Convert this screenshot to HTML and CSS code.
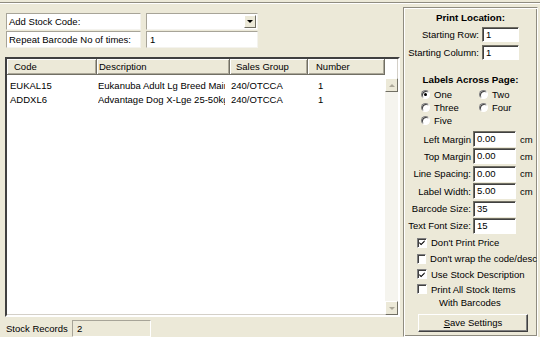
FILE: index.html
```html
<!DOCTYPE html>
<html>
<head>
<meta charset="utf-8">
<link rel="stylesheet" href="styles.css">
</head>
<body>
<div class="topline"></div>
<div class="main">
  <div class="leftcol">
    <div class="formrow">
      <div class="lbl">Add Stock Code:</div>
      <div class="combo"><span class="combo-val"></span><span class="ddbtn"><i class="tri-down"></i></span></div>
    </div>
    <div class="formrow">
      <div class="lbl">Repeat Barcode No of times:</div>
      <div class="txt">1</div>
    </div>
    <div class="list">
      <div class="lhead">
        <div class="hc c1">Code</div>
        <div class="hc c2">Description</div>
        <div class="hc c3">Sales Group</div>
        <div class="hc c4">Number</div>
      </div>
      <div class="lbody">
        <div class="rows">
          <div class="lrow">
            <div class="rc c1">EUKAL15</div>
            <div class="rc c2"><span class="clip">Eukanuba Adult Lg Breed Main</span></div>
            <div class="rc c3">240/OTCCA</div>
            <div class="rc c4">1</div>
          </div>
          <div class="lrow">
            <div class="rc c1">ADDXL6</div>
            <div class="rc c2"><span class="clip">Advantage Dog X-Lge 25-50kg</span></div>
            <div class="rc c3">240/OTCCA</div>
            <div class="rc c4">1</div>
          </div>
        </div>
        <div class="vscroll">
          <div class="sbtn"><i class="tri-up"></i></div>
          <div class="strack"></div>
          <div class="sbtn"><i class="tri-dn"></i></div>
        </div>
      </div>
    </div>
    <div class="status">
      <span class="st-lbl">Stock Records</span>
      <div class="st-box">2</div>
    </div>
  </div>

  <div class="panel">
    <div class="ptitle t1">Print Location:</div>
    <div class="srow r1"><span class="slbl">Starting Row:</span><div class="pin w37">1</div></div>
    <div class="srow r2"><span class="slbl">Starting Column:</span><div class="pin w37">1</div></div>
    <div class="ptitle t2">Labels Across Page:</div>
    <div class="radios">
      <div class="radio"><i class="rb on"></i><span>One</span></div>
      <div class="radio"><i class="rb"></i><span>Two</span></div>
      <div class="radio"><i class="rb"></i><span>Three</span></div>
      <div class="radio"><i class="rb"></i><span>Four</span></div>
      <div class="radio"><i class="rb"></i><span>Five</span></div>
    </div>
    <div class="fields">
      <div class="frow"><span class="flbl">Left Margin</span><div class="pin w43">0.00</div><span class="unit">cm</span></div>
      <div class="frow"><span class="flbl">Top Margin</span><div class="pin w43">0.00</div><span class="unit">cm</span></div>
      <div class="frow"><span class="flbl">Line Spacing:</span><div class="pin w43">0.00</div><span class="unit">cm</span></div>
      <div class="frow"><span class="flbl">Label Width:</span><div class="pin w43">5.00</div><span class="unit">cm</span></div>
      <div class="frow"><span class="flbl">Barcode Size:</span><div class="pin w43">35</div></div>
      <div class="frow"><span class="flbl">Text Font Size:</span><div class="pin w43">15</div></div>
    </div>
    <div class="checks">
      <div class="chk h16"><i class="cb on"><svg viewBox="0 0 9 9" width="9" height="9"><path d="M1.5 4 L3.5 6 L7.5 2 L7.5 3.6 L3.5 7.6 L1.5 5.6 Z" fill="#000"/></svg></i><span>Don't Print Price</span></div>
      <div class="chk h16"><i class="cb"></i><span>Don't wrap the code/desc</span></div>
      <div class="chk h15"><i class="cb on"><svg viewBox="0 0 9 9" width="9" height="9"><path d="M1.5 4 L3.5 6 L7.5 2 L7.5 3.6 L3.5 7.6 L1.5 5.6 Z" fill="#000"/></svg></i><span>Use Stock Description</span></div>
      <div class="chk h15"><i class="cb"></i><span>Print All Stock Items</span></div>
      <div class="chk2">With Barcodes</div>
    </div>
    <div class="btn"><span><u>S</u>ave Settings</span></div>
  </div>
</div>
</body>
</html>
```

FILE: styles.css
```css
html, body {
  margin: 0;
  padding: 0;
}
body {
  width: 540px;
  height: 337px;
  overflow: hidden;
  background: #ECE9D8;
  font-family: "Liberation Sans", Arial, sans-serif;
  font-size: 9.5px;
  color: #000;
}
.topline {
  margin-top: 2px;
  height: 0;
  border-top: 1px solid #8f8c80;
  border-bottom: 1px solid #fff;
}
.main {
  display: flex;
  align-items: flex-start;
}
.leftcol {
  margin-left: 5px;
  margin-top: 9px;
  width: 395px;
  display: flex;
  flex-direction: column;
}
.formrow {
  display: flex;
  height: 17px;
  margin-bottom: 1px;
  margin-left: 1px;
}
.lbl {
  box-sizing: border-box;
  width: 135px;
  height: 17px;
  background: #fff;
  border: 1px solid;
  border-color: #a7a498 #f4f3ee #f4f3ee #a7a498;
  padding-left: 2px;
  line-height: 15px;
}
.combo, .txt {
  box-sizing: border-box;
  margin-left: 5px;
  width: 112px;
  height: 17px;
  background: #fff;
  border: 1px solid;
  border-color: #a7a498 #f4f3ee #f4f3ee #a7a498;
  line-height: 15px;
  padding-left: 3px;
  position: relative;
}
.ddbtn {
  position: absolute;
  right: 1px;
  top: 1px;
  width: 12px;
  height: 13px;
  box-sizing: border-box;
  background: #ECE9D8;
  border: 1px solid;
  border-color: #fff #716f64 #716f64 #fff;
  display: flex;
  align-items: center;
  justify-content: center;
}
.tri-down {
  width: 0; height: 0;
  border-left: 3px solid transparent;
  border-right: 3px solid transparent;
  border-top: 3px solid #000;
}
.list {
  margin-top: 8px;
  box-sizing: border-box;
  width: 395px;
  height: 260px;
  border: 2px solid;
  border-color: #404040 #ffffff #ffffff #404040;
  box-shadow: inset -1px -1px 0 #d4d0c8;
  background: #fff;
  display: flex;
  flex-direction: column;
}
.lhead {
  display: grid;
  grid-template-columns: 90px 133px 78px 77px;
  height: 16px;
}
.hc {
  box-sizing: border-box;
  background: #ECE9D8;
  border-right: 1px solid #716f64;
  border-bottom: 1px solid #716f64;
  box-shadow: inset 1px 1px 0 #fff, inset -1px -1px 0 #aca899;
  line-height: 15px;
  white-space: nowrap;
  overflow: hidden;
}
.hc.c1 { padding-left: 7px; }
.hc.c2 { padding-left: 2px; }
.hc.c3 { padding-left: 6px; }
.hc.c4 { padding-left: 8px; }
.lbody {
  flex: 1;
  display: flex;
  min-height: 0;
}
.rows {
  width: 378px;
  padding-top: 4px;
}
.lrow {
  display: grid;
  grid-template-columns: 90px 133px 78px 77px;
  height: 14px;
  line-height: 14px;
}
.rc {
  white-space: nowrap;
  overflow: hidden;
}
.rc.c1 { padding-left: 3px; }
.rc.c2 { padding-left: 1px; }
.rc.c3 { padding-left: 1px; }
.rc.c4 { padding-left: 10px; }
.clip {
  display: block;
  width: 127px;
  overflow: hidden;
}
.vscroll {
  margin-top: 3px;
  width: 13px;
  display: flex;
  flex-direction: column;
  background: #f5f4ee;
}
.sbtn {
  box-sizing: border-box;
  height: 14px;
  background: #ECE9D8;
  border: 1px solid;
  border-color: #fff #716f64 #716f64 #fff;
  display: flex;
  align-items: center;
  justify-content: center;
}
.strack { flex: 1; }
.tri-up {
  width: 0; height: 0;
  border-left: 3px solid transparent;
  border-right: 3px solid transparent;
  border-bottom: 3px solid #aca899;
}
.tri-dn {
  width: 0; height: 0;
  border-left: 3px solid transparent;
  border-right: 3px solid transparent;
  border-top: 3px solid #aca899;
}
.status {
  margin-top: 3px;
  display: flex;
  align-items: center;
  height: 17px;
}
.st-lbl {
  margin-left: 1px;
  width: 66px;
}
.st-box {
  box-sizing: border-box;
  width: 79px;
  height: 17px;
  border: 1px solid;
  border-color: #a7a498 #fff #fff #a7a498;
  padding-left: 4px;
  line-height: 15px;
}

/* right panel */
.panel {
  margin-left: 3px;
  margin-top: 3px;
  box-sizing: border-box;
  width: 135px;
  height: 330px;
  border: 1px solid;
  border-color: #8f8c80 #fff #fff #8f8c80;
  box-shadow: inset 1px 1px 0 #fff, inset -1px -1px 0 #8f8c80;
  display: flex;
  flex-direction: column;
}
.ptitle {
  font-weight: bold;
  font-size: 9.8px;
  text-align: center;
  line-height: 12px;
}
.t1 { margin-top: 4px; }
.t2 { margin-top: 14px; }
.srow {
  display: flex;
  align-items: center;
  height: 15px;
  margin-top: 3px;
}
.slbl {
  width: 75px;
  text-align: right;
  white-space: nowrap;
  padding-right: 2px;
}
.pin {
  box-sizing: border-box;
  height: 15px;
  background: #fff;
  border: 1px solid;
  border-color: #716f64 #fff #fff #716f64;
  box-shadow: inset 1px 1px 0 #404040;
  padding-left: 3px;
  line-height: 13px;
}
.w37 { width: 37px; margin-left: 1px; }
.w43 { width: 43px; }
.radios {
  margin-top: 2px;
  display: grid;
  grid-template-columns: 58px 50px;
  grid-auto-rows: 13px;
  padding-left: 17px;
}
.radio {
  display: flex;
  align-items: center;
}
.radio span { margin-left: 4px; }
.rb {
  box-sizing: border-box;
  width: 9px;
  height: 9px;
  border-radius: 50%;
  background: #fff;
  border: 1px solid;
  border-color: #808080 #fff #fff #808080;
  box-shadow: inset 1px 1px 0 #404040;
  display: flex;
  align-items: center;
  justify-content: center;
}
.rb.on::after {
  content: "";
  width: 3px;
  height: 3px;
  border-radius: 50%;
  background: #000;
}
.fields {
  margin-top: 4px;
  display: flex;
  flex-direction: column;
  gap: 1.4px;
}
.frow {
  display: flex;
  align-items: center;
  height: 16px;
}
.frow .pin { height: 16px; line-height: 14px; }
.flbl {
  width: 67px;
  text-align: right;
  white-space: nowrap;
  padding-right: 2px;
}
.unit { margin-left: 4px; }
.checks {
  margin-top: 1px;
  display: flex;
  flex-direction: column;
  padding-left: 13px;
}
.chk {
  display: flex;
  align-items: center;
  white-space: nowrap;
}
.h16 { height: 16px; }
.h15 { height: 15px; }
.chk span { margin-left: 4px; }
.cb {
  box-sizing: border-box;
  width: 10px;
  height: 10px;
  background: #fff;
  border: 1px solid;
  border-color: #808080 #fff #fff #808080;
  box-shadow: inset 1px 1px 0 #404040;
  display: flex;
  align-items: center;
  justify-content: center;
}
.cb svg { display: block; }
.chk2 {
  padding-left: 22px;
  line-height: 12px;
}
.btn {
  margin-top: 5px;
  margin-left: 14px;
  box-sizing: border-box;
  width: 110px;
  height: 18px;
  background: #ECE9D8;
  border: 1px solid;
  border-color: #fff #404040 #404040 #fff;
  box-shadow: inset -1px -1px 0 #808080;
  display: flex;
  align-items: center;
  justify-content: center;
}
```
